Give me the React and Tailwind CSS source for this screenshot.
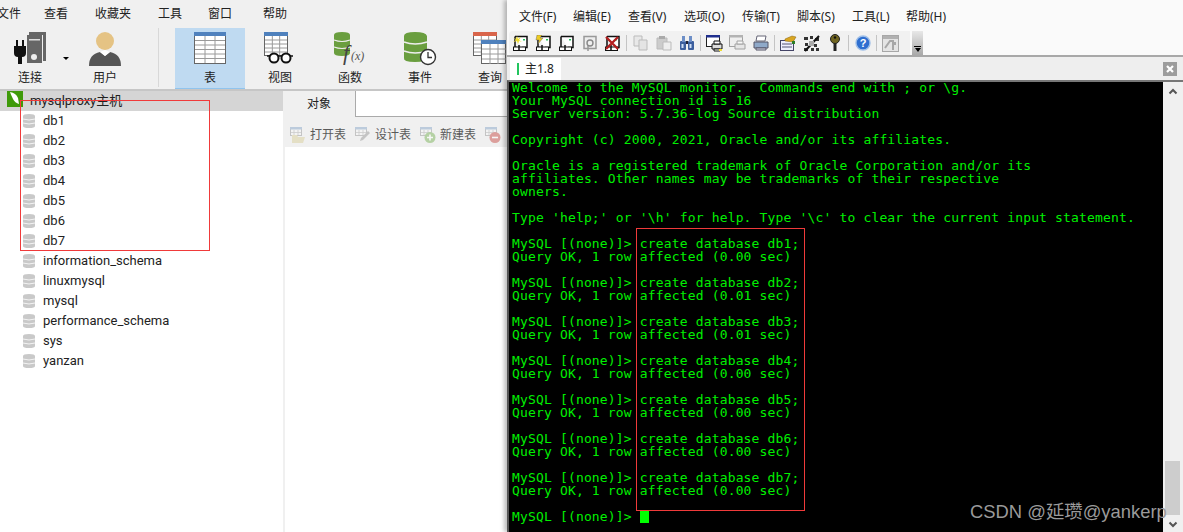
const uiFont = { fontFamily: '"Noto Sans", "Noto Sans CJK SC", sans-serif' };
const treeFont = "font-['Roboto','Noto_Sans_CJK_SC',sans-serif]";

const leftMenu = [
  ["文件", "w-[47px] -ml-[3px]"],
  ["查看", "w-[51px]"],
  ["收藏夹", "w-[63px]"],
  ["工具", "w-[50px]"],
  ["窗口", "w-[55px]"],
  ["帮助", "w-[30px]"],
];
const rightMenu = [
  ["文件(F)", "w-[54px]"],
  ["编辑(E)", "w-[55px]"],
  ["查看(V)", "w-[56px]"],
  ["选项(O)", "w-[58px]"],
  ["传输(T)", "w-[55px]"],
  ["脚本(S)", "w-[55px]"],
  ["工具(L)", "w-[54px]"],
  ["帮助(H)", "w-[50px]"],
];
const dbNames = ["db1", "db2", "db3", "db4", "db5", "db6", "db7", "information_schema", "linuxmysql", "mysql", "performance_schema", "sys", "yanzan"];

function GridLines({ x, y, w, h, cols, rows }) {
  const lines = [];
  for (let i = 1; i < cols; i++) lines.push(<line key={"c" + i} x1={x + (w * i) / cols} y1={y} x2={x + (w * i) / cols} y2={y + h} />);
  for (let i = 1; i < rows; i++) lines.push(<line key={"r" + i} x1={x} y1={y + (h * i) / rows} x2={x + w} y2={y + (h * i) / rows} />);
  return <g stroke="#9a9a9a" strokeWidth="1">{lines}</g>;
}

function ConnectIcon() {
  return (
    <svg width="34" height="34" viewBox="0 0 34 34">
      <path d="M16 0h17v29h-3V3H16z" fill="#666" />
      <rect x="14" y="3" width="15" height="28" fill="#666" />
      <rect x="16" y="7" width="11" height="1.5" fill="#ddd" />
      <circle cx="21" cy="25" r="3" fill="#eee" />
      <path d="M1 14h2V8h2v6h4V8h2v6h2v7q0 4-4 4v7H5v-7q-4 0-4-4z" fill="#111" />
    </svg>
  );
}

function UserIcon() {
  return (
    <svg width="34" height="34" viewBox="0 0 34 34">
      <path d="M1 34q0-12 11-14l5 4 5-4q11 2 11 14z" fill="#555" />
      <path d="M12 20l5 4 5-4-5-2z" fill="#fff" />
      <circle cx="17" cy="9" r="9" fill="#e5c384" />
    </svg>
  );
}

function TableIcon() {
  return (
    <svg width="32" height="32" viewBox="0 0 32 32">
      <rect x="0.5" y="0.5" width="31" height="31" fill="#fff" stroke="#666" />
      <GridLines x={1} y={4} w={30} h={27} cols={3} rows={6} />
      <rect width="32" height="4" fill="#4f81bd" />
    </svg>
  );
}

function ViewIcon() {
  return (
    <svg width="32" height="32" viewBox="0 0 32 32">
      <rect x="0.5" y="0.5" width="23" height="23" fill="#fff" stroke="#666" />
      <GridLines x={1} y={4} w={22} h={20} cols={3} rows={5} />
      <rect width="24" height="4" fill="#4f81bd" />
      <path d="M3 24h26" stroke="#111" strokeWidth="1.5" />
      <circle cx="10" cy="26" r="4.5" fill="#fff" stroke="#111" strokeWidth="2" />
      <circle cx="22" cy="26" r="4.5" fill="#fff" stroke="#111" strokeWidth="2" />
    </svg>
  );
}

function FuncIcon() {
  return (
    <svg width="34" height="34" viewBox="0 0 34 34">
      <path d="M1 3q0-3 8-3t8 3v18q0 3-8 3t-8-3z" fill="#6a9e3f" />
      <path d="M1 8q8 3 16 0M1 15q8 3 16 0" stroke="#eee" strokeWidth="1.2" fill="none" />
      <text x="10" y="28" fill="#444" fontSize="22" fontStyle="italic" fontFamily="Liberation Serif, serif">f</text>
      <text x="18" y="28" fill="#555" fontSize="12" fontStyle="italic" fontFamily="Liberation Serif, serif">(x)</text>
    </svg>
  );
}

function EventIcon() {
  return (
    <svg width="34" height="34" viewBox="0 0 34 34">
      <path d="M1 4q0-4 11-4t12 4v22q0 4-12 4T1 26z" fill="#6a9e3f" />
      <path d="M1 10q11 4 23 0M1 19q11 4 23 0" stroke="#eee" strokeWidth="1.4" fill="none" />
      <circle cx="25" cy="25" r="7.5" fill="#fff" stroke="#333" strokeWidth="1.4" />
      <path d="M25 20v5.5h4" stroke="#333" strokeWidth="1.3" fill="none" />
    </svg>
  );
}

function QueryIcon() {
  return (
    <svg width="34" height="32" viewBox="0 0 34 32">
      <rect x="0.5" y="0.5" width="23" height="23" fill="#fff" stroke="#666" />
      <GridLines x={1} y={4} w={22} h={20} cols={3} rows={5} />
      <rect width="24" height="4" fill="#d9654b" />
      <rect x="8.5" y="8.5" width="24" height="23" fill="#fff" stroke="#666" />
      <GridLines x={9} y={12} w={24} h={20} cols={3} rows={4} />
      <rect x="8" y="8" width="25" height="4" fill="#4f81bd" />
    </svg>
  );
}

function BigTool({ label, active, width = "w-[70px]", children }) {
  return (
    <div className={"h-[61px] flex flex-col items-center shrink-0 " + width + " " + (active ? "bg-[#bfdaf1] border-b border-[#90c4ee]" : "")}>
      <div className="h-[38px] mt-[4px] flex items-start justify-center">{children}</div>
      <span className="text-[12px] leading-[16px] text-[#222]">{label}</span>
    </div>
  );
}

function DbIcon() {
  return (
    <svg width="12" height="14" viewBox="0 0 12 14">
      <path d="M0 2q0-2 6-2t6 2v10q0 2-6 2t-6-2z" fill="#c9c9c9" />
      <path d="M0 5q6 2 12 0M0 9q6 2 12 0" stroke="#f4f4f4" strokeWidth="1" fill="none" />
    </svg>
  );
}

function SmallTable({ children }) {
  return (
    <svg width="16" height="16" viewBox="0 0 16 16" className="opacity-50">
      <rect x="0.5" y="0.5" width="11" height="8" fill="#f6f6f6" stroke="#999" />
      <rect x="0" y="0" width="12" height="2.5" fill="#8aa8c9" />
      <path d="M4 3v5M8 3v5M1 5.5h10" stroke="#aaa" strokeWidth="0.8" />
      {children}
    </svg>
  );
}

function ObjTool({ label, className, children }) {
  return (
    <div className={"flex items-center text-[12px] text-[#5a5a5a] " + className}>
      {children}
      <span className="ml-[4px]">{label}</span>
    </div>
  );
}

function Session({ mark }) {
  return (
    <svg width="17" height="17" viewBox="0 0 17 17">
      <path d="M3 1.5h12v11H10" fill="#fff" stroke="#111" strokeWidth="1.5" />
      <path d="M3 1.5v11h2" fill="none" stroke="#111" strokeWidth="1.5" />
      <rect x="1.5" y="12" width="12" height="3.5" fill="#fff" stroke="#111" strokeWidth="1" />
      <path d="M7 10v6" stroke="#111" strokeWidth="1.5" />
      <rect x="11" y="4" width="2" height="1.5" fill="#22c55e" />
      {mark === "new" && <path d="M1 3l3 2-3 2 4-1 1 3 1-3 3 1-3-2 2-3-3 2-1-3-1 3z" fill="#eedd33" />}
      {mark === "bolt" && <path d="M2 0h5L5 3h3L3 9l1-4H1z" fill="#eecc22" stroke="#555" strokeWidth="0.4" />}
      {mark === "x" && <path d="M2 2l12 12M14 2L2 14" stroke="#b32020" strokeWidth="2.4" />}
    </svg>
  );
}

function Tool({ children }) {
  return <div className="w-[23px] h-[24px] flex items-center justify-center shrink-0">{children}</div>;
}

function Sep() {
  return <div className="w-px h-[16px] bg-[#c4c4c4] mx-[2px] shrink-0" />;
}

function Terminal() {
  const lines = [
    "Welcome to the MySQL monitor.  Commands end with ; or \\g.",
    "Your MySQL connection id is 16",
    "Server version: 5.7.36-log Source distribution",
    "",
    "Copyright (c) 2000, 2021, Oracle and/or its affiliates.",
    "",
    "Oracle is a registered trademark of Oracle Corporation and/or its",
    "affiliates. Other names may be trademarks of their respective",
    "owners.",
    "",
    "Type 'help;' or '\\h' for help. Type '\\c' to clear the current input statement.",
    "",
  ];
  const results = ["0.00", "0.01", "0.01", "0.00", "0.00", "0.00", "0.00"];
  results.forEach((t, i) => {
    lines.push(`MySQL [(none)]> create database db${i + 1};`);
    lines.push(`Query OK, 1 row affected (${t} sec)`);
    lines.push("");
  });
  return (
    <div className="flex-1 bg-black pl-[3px] overflow-hidden text-[#00f000] text-[13px] leading-[13px] tracking-[0.16px] font-['DejaVu_Sans_Mono',monospace]">
      <div className="-mt-[1px]">
        {lines.map((l, i) => (
          <div key={i} className="h-[13px] whitespace-pre">{l}</div>
        ))}
        <div className="h-[13px] whitespace-pre flex">
          <span>{"MySQL [(none)]> "}</span>
          <span className="w-[9px] h-[13px] bg-[#00ff00]" />
        </div>
      </div>
    </div>
  );
}

export default function App() {
  return (
    <div className="relative w-full h-screen overflow-hidden flex bg-white" style={uiFont}>
      {/* left window: database manager */}
      <div className="w-[507px] h-full shrink-0 flex flex-col bg-[#f0f0f0] overflow-hidden">
        <div className="h-[28px] flex items-center text-[12px] text-[#222] shrink-0 whitespace-nowrap">
          {leftMenu.map(([label, cls]) => (
            <span key={label} className={"shrink-0 " + cls}>{label}</span>
          ))}
        </div>
        <div className="h-[63px] flex border-b-2 border-[#c6c6c6] shrink-0">
          <BigTool label="连接" width="w-[60px]"><ConnectIcon /></BigTool>
          <div className="w-[10px] relative shrink-0">
            <div className="absolute left-[3px] top-[29px] w-0 h-0 border-x-[3px] border-x-transparent border-t-[3px] border-t-black" />
          </div>
          <BigTool label="用户"><UserIcon /></BigTool>
          <div className="w-px h-[59px] bg-[#d8d8d8] ml-[18px] mr-[16px] shrink-0" />
          <div className="flex">
            <BigTool label="表" active><TableIcon /></BigTool>
            <BigTool label="视图"><ViewIcon /></BigTool>
            <BigTool label="函数"><FuncIcon /></BigTool>
            <BigTool label="事件"><EventIcon /></BigTool>
            <BigTool label="查询"><QueryIcon /></BigTool>
          </div>
        </div>
        <div className="flex-1 flex min-h-0">
          <div className={"w-[283px] shrink-0 bg-white " + treeFont}>
            <div className="h-[20px] bg-[#d5d5d5] flex items-start pl-[7px]">
              <svg width="16" height="16" viewBox="0 0 16 16" className="shrink-0">
                <rect width="16" height="16" fill="#3f9a0a" />
                <path d="M3 1q6 1 8 6l1 6q-4-1-6-5T3 1z" fill="#fff" />
              </svg>
              <span className="ml-[7px] text-[13px] leading-[20px] text-[#222]">mysqlproxy主机</span>
            </div>
            {dbNames.map((n) => (
              <div key={n} className="h-[20px] flex items-center pl-[23px]">
                <DbIcon />
                <span className="ml-[8px] text-[13px] text-[#222]">{n}</span>
              </div>
            ))}
          </div>
          <div className="flex-1 flex flex-col">
            <div className="h-[26px] flex shrink-0">
              <div className="w-[72px] flex items-center justify-center text-[12px] text-[#222]">对象</div>
              <div className="flex-1 bg-white border-l border-b border-[#aaa]" />
            </div>
            <div className="h-[30px] flex items-center shrink-0 pl-[7px] pt-[6px] whitespace-nowrap">
              <ObjTool label="打开表" className="w-[65px]">
                <SmallTable><path d="M2 8h5l1 2h7l-2 6H2z" fill="#d9cf9c" /></SmallTable>
              </ObjTool>
              <ObjTool label="设计表" className="w-[65px]">
                <SmallTable><path d="M5 14l1-3 7-7 2 2-7 7z" fill="#999" /></SmallTable>
              </ObjTool>
              <ObjTool label="新建表" className="w-[65px]">
                <SmallTable>
                  <circle cx="10" cy="10.5" r="5.5" fill="#7cb45a" />
                  <path d="M10 7.5v6M7 10.5h6" stroke="#fff" strokeWidth="1.6" />
                </SmallTable>
              </ObjTool>
              <ObjTool label="" className="w-[20px]">
                <SmallTable>
                  <circle cx="10" cy="10.5" r="5.5" fill="#c9504a" />
                  <path d="M7 10.5h6" stroke="#fff" strokeWidth="1.6" />
                </SmallTable>
              </ObjTool>
            </div>
            <div className="flex-1 bg-white ml-[2px]" />
          </div>
        </div>
      </div>

      {/* right window: terminal client */}
      <div className="flex-1 h-full flex flex-col bg-[#fafafa] pt-[3px] shadow-[-3px_0_4px_rgba(0,0,0,0.25)] z-10 min-w-0">
        <div className="h-[28px] flex items-center pl-[12px] text-[12px] text-[#222] shrink-0 whitespace-nowrap">
          {rightMenu.map(([m, cls]) => (
            <span key={m} className={"shrink-0 " + cls}>{m}</span>
          ))}
        </div>
        <div className="h-[26px] flex items-start shrink-0 border-b-2 border-[#a8a8a8] pl-[2px]">
          <div className="w-[401px] h-[24px] bg-[#f1f1f1] rounded-l-sm flex items-center">
            <Tool><Session mark="new" /></Tool>
            <Tool><Session mark="bolt" /></Tool>
            <Tool><Session /></Tool>
            <Tool>
              <svg width="17" height="17" viewBox="0 0 17 17"><path d="M3 1.5h12v12H3z" fill="#eee" stroke="#999" strokeWidth="1.5" /><path d="M6 8a3 3 0 0 1 6 0 3 3 0 0 1-6 0" fill="none" stroke="#888" strokeWidth="1.4" /><path d="M7 11v5" stroke="#999" strokeWidth="1.5" /></svg>
            </Tool>
            <Tool><Session mark="x" /></Tool>
            <Sep />
            <Tool>
              <svg width="16" height="16" viewBox="0 0 16 16"><path d="M1 1h8v10H1z" fill="#e8e8e8" stroke="#bbb" /><path d="M6 5h8v10H6z" fill="#e4e4e4" stroke="#bbb" /></svg>
            </Tool>
            <Tool>
              <svg width="16" height="16" viewBox="0 0 16 16"><path d="M1 3h10v11H1z" fill="#ccc" stroke="#bbb" /><rect x="3" y="1" width="6" height="3" fill="#aaa" /><path d="M7 7h8v8H7z" fill="#eee" stroke="#bbb" /></svg>
            </Tool>
            <Tool>
              <svg width="16" height="16" viewBox="0 0 16 16"><rect x="1" y="6" width="6" height="9" rx="1" fill="#3c5f9e" /><rect x="9" y="6" width="6" height="9" rx="1" fill="#3c5f9e" /><rect x="3" y="1" width="3" height="6" fill="#6d8fc7" /><rect x="10" y="1" width="3" height="6" fill="#6d8fc7" /><rect x="7" y="6" width="2" height="3" fill="#223" /><rect x="2.5" y="9" width="2" height="4" fill="#cfe0f5" /><rect x="10.5" y="9" width="2" height="4" fill="#cfe0f5" /></svg>
            </Tool>
            <Sep />
            <Tool>
              <svg width="17" height="17" viewBox="0 0 17 17"><rect x="0.5" y="0.5" width="13" height="11" fill="#fff" stroke="#222" /><rect width="14" height="2.5" fill="#20308f" /><path d="M6 9h10v5H6z" fill="#ddd" stroke="#111" /><path d="M8 6h6v3H8zM8 14h6v2H8z" fill="#fff" stroke="#111" /><rect x="13" y="14" width="3" height="2" fill="#eedd33" /></svg>
            </Tool>
            <Tool>
              <svg width="17" height="17" viewBox="0 0 17 17" className="opacity-50"><rect x="0.5" y="0.5" width="13" height="11" fill="#eee" stroke="#555" /><rect width="14" height="2.5" fill="#777" /><path d="M6 9h10v5H6z" fill="#ddd" stroke="#555" /><path d="M8 6h6v3H8z" fill="#fff" stroke="#555" /></svg>
            </Tool>
            <Tool>
              <svg width="16" height="16" viewBox="0 0 16 16"><path d="M4 1h9l-1 5H3z" fill="#fff" stroke="#667" /><path d="M1 7h14v6H1z" fill="#8fa9c9" stroke="#556" /><path d="M3 13h10v2H3z" fill="#dde" stroke="#556" /></svg>
            </Tool>
            <Sep />
            <Tool>
              <svg width="17" height="16" viewBox="0 0 17 16"><rect x="0.5" y="5.5" width="13" height="10" fill="#eef" stroke="#446" /><path d="M2 9h10M2 12h10" stroke="#557" /><path d="M5 4l7-3 4 1-3 5-8-1z" fill="#d9a520" stroke="#86620f" strokeWidth="0.5" /><rect x="12" y="6" width="3" height="3" fill="#2a7d2a" /></svg>
            </Tool>
            <Tool>
              <svg width="17" height="17" viewBox="0 0 17 17"><path d="M1 2h4v3H1zM7 1h3v3H7zM12 3h4v3h-4zM2 8h3v3H2zM11 9h3v3h-3zM1 13h4v3H1zM8 13h3v3H8zM13 13h3v3h-3z" fill="#333" /><path d="M2 16L16 1" stroke="#111" strokeWidth="2" /><path d="M6 6h5v5H6z" fill="#aaa" /></svg>
            </Tool>
            <Tool>
              <svg width="10" height="18" viewBox="0 0 10 18"><circle cx="5" cy="5" r="4.5" fill="#6f6420" stroke="#222" /><circle cx="5" cy="3.5" r="1.2" fill="#111" /><path d="M3.5 9h3v8h-3z" fill="#222" /></svg>
            </Tool>
            <Sep />
            <Tool>
              <svg width="16" height="16" viewBox="0 0 16 16"><circle cx="8" cy="8" r="7" fill="#2f6fd0" stroke="#9fbfe8" strokeWidth="1.4" /><text x="8" y="12" textAnchor="middle" fontSize="11" fontWeight="700" fill="#fff" fontFamily="Liberation Sans, sans-serif">?</text></svg>
            </Tool>
            <Sep />
            <Tool>
              <svg width="17" height="17" viewBox="0 0 17 17" className="opacity-60"><rect x="0.5" y="0.5" width="16" height="16" fill="#ddd" stroke="#777" /><rect x="1" y="1" width="15" height="3" fill="#888" /><path d="M3 13l5-7h3v9" fill="none" stroke="#777" strokeWidth="2" /><rect x="11" y="7" width="3" height="3" fill="#777" /></svg>
            </Tool>
          </div>
          <div className="w-[11px] h-[24px] ml-[2px] bg-gradient-to-b from-[#e8e8e8] to-[#a9a9a9] flex flex-col items-center justify-end pb-[3px]">
            <div className="w-[7px] h-[1px] bg-black mb-[1px]" />
            <div className="w-0 h-0 border-x-[3.5px] border-x-transparent border-t-[4px] border-t-black" />
          </div>
        </div>
        <div className="h-[23px] flex shrink-0 bg-[#eeeeee] pl-[3px] pr-[6px] items-end">
          <div className="w-[51px] h-[22px] bg-white flex items-center pl-[7px]">
            <div className="w-[2px] h-[12px] bg-[#22c55e] mr-[6px]" />
            <span className="text-[12px] text-[#222]">主1.8</span>
          </div>
          <div className="flex-1" />
          <div className="w-[14px] h-[14px] mb-[4px] bg-[#9c9c9c] flex items-center justify-center">
            <svg width="10" height="10" viewBox="0 0 10 10"><path d="M2 2l6 6M8 2L2 8" stroke="#fff" strokeWidth="2.2" /></svg>
          </div>
        </div>
        <div className="flex-1 flex min-h-0 border-t-2 border-l-2 border-[#777] border-l-[#555]">
          <Terminal />
          <div className="w-[20px] shrink-0 bg-[#f0f0f0] flex flex-col items-center justify-between">
            <svg width="10" height="7" viewBox="0 0 10 7" className="mt-[6px]"><path d="M1.5 5.5L5 2l3.5 3.5" stroke="#555" strokeWidth="2" fill="none" /></svg>
            <div className="flex flex-col items-center">
              <div className="w-[15px] h-[54px] bg-[#cdcdcd] mb-[6px] -ml-[1px]" />
              <svg width="10" height="7" viewBox="0 0 10 7" className="mb-[4px]"><path d="M1.5 1.5L5 5l3.5-3.5" stroke="#555" strokeWidth="2" fill="none" /></svg>
            </div>
          </div>
        </div>
      </div>

      {/* red highlight boxes drawn over the screenshot */}
      <div className="absolute left-[20px] top-[100px] w-[190px] h-[151px] border border-[#f03a3a] z-20" />
      <div className="absolute left-[636px] top-[228px] w-[169px] h-[283px] border border-[#f03a3a] z-20" />
      <div className="absolute left-[970px] top-[500px] text-[18.4px] leading-[24px] text-[#9a9a9a] z-30 whitespace-nowrap font-['Liberation_Sans','Noto_Sans_CJK_SC',sans-serif]">
        CSDN @延瓒@yankerp
      </div>
    </div>
  );
}
